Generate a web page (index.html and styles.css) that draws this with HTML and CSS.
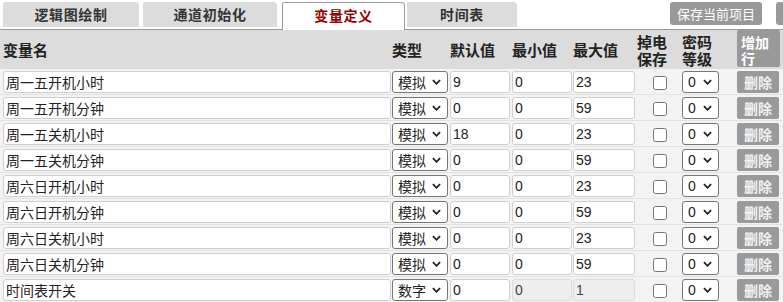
FILE: index.html
```html
<!DOCTYPE html>
<html lang="zh-CN">
<head>
<meta charset="utf-8">
<title>变量定义</title>
<link rel="stylesheet" href="styles.css">
</head>
<body>
<div class="topbar">
  <div class="tab t1">逻辑图绘制</div>
  <div class="tab t2">通道初始化</div>
  <div class="tab t3 active">变量定义</div>
  <div class="tab t4">时间表</div>
  <button class="btn save">保存当前项目</button>
  <button class="btn other"></button>
</div>

<div class="grid head">
  <div>变量名</div>
  <div>类型</div>
  <div>默认值</div>
  <div>最小值</div>
  <div>最大值</div>
  <div class="two"><span>掉电</span><span>保存</span></div>
  <div class="two"><span>密码</span><span>等级</span></div>
  <button class="add">增加行</button>
</div>

<div class="grid row">
  <input class="txt name" value="周一五开机小时">
  <span class="selwrap type"><select class="sel"><option>模拟</option><option>数字</option></select><svg class="chev" viewBox="0 0 10 6"><path d="M1 1 L5 5 L9 1"/></svg></span>
  <input class="txt n1" value="9">
  <input class="txt n2" value="0">
  <input class="txt n3" value="23">
  <input class="chk" type="checkbox">
  <span class="selwrap lvl"><select class="sel"><option>0</option></select><svg class="chev" viewBox="0 0 10 6"><path d="M1 1 L5 5 L9 1"/></svg></span>
  <button class="del">删除</button>
</div>
<div class="grid row">
  <input class="txt name" value="周一五开机分钟">
  <span class="selwrap type"><select class="sel"><option>模拟</option><option>数字</option></select><svg class="chev" viewBox="0 0 10 6"><path d="M1 1 L5 5 L9 1"/></svg></span>
  <input class="txt n1" value="0">
  <input class="txt n2" value="0">
  <input class="txt n3" value="59">
  <input class="chk" type="checkbox">
  <span class="selwrap lvl"><select class="sel"><option>0</option></select><svg class="chev" viewBox="0 0 10 6"><path d="M1 1 L5 5 L9 1"/></svg></span>
  <button class="del">删除</button>
</div>
<div class="grid row">
  <input class="txt name" value="周一五关机小时">
  <span class="selwrap type"><select class="sel"><option>模拟</option><option>数字</option></select><svg class="chev" viewBox="0 0 10 6"><path d="M1 1 L5 5 L9 1"/></svg></span>
  <input class="txt n1" value="18">
  <input class="txt n2" value="0">
  <input class="txt n3" value="23">
  <input class="chk" type="checkbox">
  <span class="selwrap lvl"><select class="sel"><option>0</option></select><svg class="chev" viewBox="0 0 10 6"><path d="M1 1 L5 5 L9 1"/></svg></span>
  <button class="del">删除</button>
</div>
<div class="grid row">
  <input class="txt name" value="周一五关机分钟">
  <span class="selwrap type"><select class="sel"><option>模拟</option><option>数字</option></select><svg class="chev" viewBox="0 0 10 6"><path d="M1 1 L5 5 L9 1"/></svg></span>
  <input class="txt n1" value="0">
  <input class="txt n2" value="0">
  <input class="txt n3" value="59">
  <input class="chk" type="checkbox">
  <span class="selwrap lvl"><select class="sel"><option>0</option></select><svg class="chev" viewBox="0 0 10 6"><path d="M1 1 L5 5 L9 1"/></svg></span>
  <button class="del">删除</button>
</div>
<div class="grid row">
  <input class="txt name" value="周六日开机小时">
  <span class="selwrap type"><select class="sel"><option>模拟</option><option>数字</option></select><svg class="chev" viewBox="0 0 10 6"><path d="M1 1 L5 5 L9 1"/></svg></span>
  <input class="txt n1" value="0">
  <input class="txt n2" value="0">
  <input class="txt n3" value="23">
  <input class="chk" type="checkbox">
  <span class="selwrap lvl"><select class="sel"><option>0</option></select><svg class="chev" viewBox="0 0 10 6"><path d="M1 1 L5 5 L9 1"/></svg></span>
  <button class="del">删除</button>
</div>
<div class="grid row">
  <input class="txt name" value="周六日开机分钟">
  <span class="selwrap type"><select class="sel"><option>模拟</option><option>数字</option></select><svg class="chev" viewBox="0 0 10 6"><path d="M1 1 L5 5 L9 1"/></svg></span>
  <input class="txt n1" value="0">
  <input class="txt n2" value="0">
  <input class="txt n3" value="59">
  <input class="chk" type="checkbox">
  <span class="selwrap lvl"><select class="sel"><option>0</option></select><svg class="chev" viewBox="0 0 10 6"><path d="M1 1 L5 5 L9 1"/></svg></span>
  <button class="del">删除</button>
</div>
<div class="grid row">
  <input class="txt name" value="周六日关机小时">
  <span class="selwrap type"><select class="sel"><option>模拟</option><option>数字</option></select><svg class="chev" viewBox="0 0 10 6"><path d="M1 1 L5 5 L9 1"/></svg></span>
  <input class="txt n1" value="0">
  <input class="txt n2" value="0">
  <input class="txt n3" value="23">
  <input class="chk" type="checkbox">
  <span class="selwrap lvl"><select class="sel"><option>0</option></select><svg class="chev" viewBox="0 0 10 6"><path d="M1 1 L5 5 L9 1"/></svg></span>
  <button class="del">删除</button>
</div>
<div class="grid row">
  <input class="txt name" value="周六日关机分钟">
  <span class="selwrap type"><select class="sel"><option>模拟</option><option>数字</option></select><svg class="chev" viewBox="0 0 10 6"><path d="M1 1 L5 5 L9 1"/></svg></span>
  <input class="txt n1" value="0">
  <input class="txt n2" value="0">
  <input class="txt n3" value="59">
  <input class="chk" type="checkbox">
  <span class="selwrap lvl"><select class="sel"><option>0</option></select><svg class="chev" viewBox="0 0 10 6"><path d="M1 1 L5 5 L9 1"/></svg></span>
  <button class="del">删除</button>
</div>
<div class="grid row">
  <input class="txt name" value="时间表开关">
  <span class="selwrap type"><select class="sel"><option>数字</option><option>模拟</option></select><svg class="chev" viewBox="0 0 10 6"><path d="M1 1 L5 5 L9 1"/></svg></span>
  <input class="txt n1" value="0">
  <input class="txt n2" value="0" disabled>
  <input class="txt n3" value="1" disabled>
  <input class="chk" type="checkbox">
  <span class="selwrap lvl"><select class="sel"><option>0</option></select><svg class="chev" viewBox="0 0 10 6"><path d="M1 1 L5 5 L9 1"/></svg></span>
  <button class="del">删除</button>
</div>
</body>
</html>
```

FILE: styles.css
```css
* { box-sizing: border-box; }
html { overflow: hidden; }
body {
  margin: 0;
  font-family: "Noto Sans CJK SC", "Liberation Sans", sans-serif;
  background: #fff;
  color: #222;
}

.topbar {
  display: flex;
  align-items: flex-start;
  height: 30px;
  padding: 2px 0 0 3px;
  border-bottom: 1px solid #9a9a9a;
}

.tab {
  flex-shrink: 0;
  height: 25px;
  background: #dcdcdc;
  color: #333;
  font-size: 14px;
  font-weight: bold;
  letter-spacing: 0.6px;
  line-height: 25px;
  text-align: center;
  border-radius: 2px 4px 0 0;
}
.t1 { width: 136px; margin-right: 4px; }
.t2 { width: 134px; margin-right: 5px; }
.t3 { width: 123px; margin-right: 2px; }
.t4 { width: 110px; }
.tab.active {
  height: 28px;
  background: #fff;
  color: #990000;
  border: 1px solid #9a9a9a;
  border-bottom: none;
  line-height: 24px;
}

.btn {
  flex-shrink: 0;
  height: 23px;
  background: #999;
  color: #fff;
  border: none;
  border-radius: 3px;
  font-family: "Noto Sans CJK SC", sans-serif;
  font-size: 13px;
  line-height: 23px;
  padding: 0;
}
.save { width: 92px; margin-left: 153px; }
.other { width: 80px; margin-left: 14px; }

.grid {
  display: grid;
  grid-template-columns: 389px 58px 62px 61px 64px 45px 55px 42px;
  padding-left: 3px;
  align-items: center;
}

.head {
  height: 39px;
  background: #dcdcdc;
  font-size: 15px;
  font-weight: bold;
  line-height: 18px;
  color: #222;
}
.two {
  display: flex;
  flex-direction: column;
  line-height: 17px;
  padding-top: 1px;
}

.add {
  align-self: start;
  display: block;
  width: 43px;
  height: 37px;
  padding: 2px 4px 0;
  background: #999;
  color: #fff;
  border: none;
  border-radius: 2px;
  font-family: "Noto Sans CJK SC", sans-serif;
  font-size: 14px;
  font-weight: bold;
  line-height: 16px;
  text-align: left;
}

.row {
  height: 26px;
  background: #f3f3f3;
  border-bottom: 1px solid #e2e2e2;
}

.txt {
  height: 22px;
  margin: 0;
  padding: 0 2px;
  border: 1px solid #cfcfcf;
  border-radius: 3px;
  background: #fff;
  color: #222;
  font-family: "Liberation Sans", "Noto Sans CJK SC", sans-serif;
  font-size: 14px;
  outline: none;
}
.txt:disabled {
  background: #eeeeee;
  border-color: #dcdcdc;
  color: #444;
}
.name { width: 388px; }
.n1 { width: 60px; }
.n2 { width: 60px; }
.n3 { width: 62px; }

.selwrap {
  position: relative;
  display: block;
  height: 22px;
}
.selwrap.type { width: 56px; }
.selwrap.lvl { width: 37px; }
.sel {
  appearance: none;
  -webkit-appearance: none;
  display: block;
  width: 100%;
  height: 22px;
  margin: 0;
  padding: 0 0 0 5px;
  border: 1px solid #767676;
  border-radius: 3px;
  background: #fff;
  font-family: "Noto Sans CJK SC", "Liberation Sans", sans-serif;
  font-size: 14px;
  line-height: 20px;
  color: #222;
}
.lvl .sel { font-family: "Liberation Sans", sans-serif; padding-left: 5px; }
.chev {
  position: absolute;
  right: 7px;
  top: 8px;
  width: 9px;
  height: 6px;
  fill: none;
  stroke: #222;
  stroke-width: 2;
  pointer-events: none;
}

.chk {
  justify-self: center;
  width: 14px;
  height: 14px;
  margin: 2px 0 0;
}

.del {
  width: 42px;
  height: 22px;
  padding: 0;
  background: #9a9a9a;
  color: #f2f2f2;
  border: none;
  border-radius: 2px;
  font-family: "Noto Sans CJK SC", sans-serif;
  font-size: 14px;
  font-weight: bold;
  line-height: 22px;
}
```
